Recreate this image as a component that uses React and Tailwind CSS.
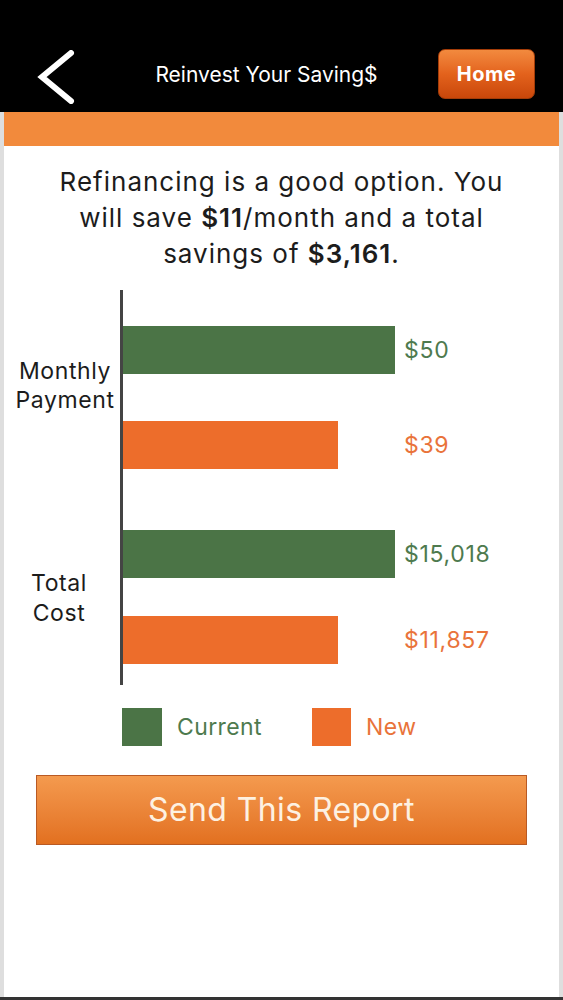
import React from "react";

const font = { fontFamily: 'Inter, "Liberation Sans", Arial, sans-serif' };

function Bar({ width, color, value, textColor, className = "" }) {
  return (
    <div className={`flex items-center ${className}`}>
      <div className="w-[281px] shrink-0">
        <div className={`h-[48px] ${color}`} style={{ width }} />
      </div>
      <span className={`text-[23px] tracking-[0.7px] ${textColor}`}>{value}</span>
    </div>
  );
}

export default function App() {
  return (
    <div className="w-full h-[1000px] bg-black flex flex-col" style={font}>
      {/* status bar + nav */}
      <div className="h-[112px] shrink-0 flex flex-col">
        <div className="h-[48px]" />
        <div className="flex-1 relative flex items-center justify-center">
          <svg
            className="absolute left-[36px] top-[2px]"
            width="40"
            height="54"
            viewBox="0 0 40 54"
          >
            <polyline
              points="35,3 6,27 35,51"
              fill="none"
              stroke="white"
              strokeWidth="6"
              strokeLinecap="round"
              strokeLinejoin="miter"
            />
          </svg>
          <span className="text-white text-[21px] ml-[-30px] mb-[10px]">Reinvest Your Saving$</span>
          <button className="absolute left-[438px] top-[1px] w-[97px] h-[50px] rounded-[7px] border border-[#a33c08] bg-gradient-to-b from-[#f28a3e] via-[#e3621c] to-[#c9470a] text-white font-bold text-[20px] tracking-[0.5px]">
            Home
          </button>
        </div>
      </div>

      {/* content */}
      <div className="flex-1 bg-white border-x-[4px] border-[#dedede] flex flex-col">
        <div className="h-[34px] bg-[#f28a3c] shrink-0" />

        <p className="mt-[18px] text-center text-[26px] tracking-[1px] leading-[36px] text-[#1c1c1c]">
          Refinancing is a good option. You
          <br />
          will save <b className="font-semibold">$11</b>/month and a total
          <br />
          savings of <b className="font-semibold">$3,161</b>.
        </p>

        {/* chart */}
        <div className="mt-[18px] flex flex-col">
          <div className="flex">
            <div className="w-[116px] shrink-0 flex items-center justify-center text-center text-[23px] tracking-[0.6px] leading-[29px] text-[#1c1c1c] pb-[18px] pl-[6px]">
              Monthly
              <br />
              Payment
            </div>
            <div className="border-l-[3px] border-[#444] pt-[36px] pb-[31px]">
              <Bar width="272px" color="bg-[#4b7446]" value="$50" textColor="text-[#4e7a4e]" />
              <Bar width="215px" color="bg-[#ed6d2b]" value="$39" textColor="text-[#e9733a]" className="mt-[47px]" />
            </div>
          </div>
          <div className="flex">
            <div className="w-[116px] shrink-0 flex items-center justify-center text-center text-[23px] tracking-[0.6px] leading-[30px] text-[#1c1c1c] pt-[10px] pr-[6px]">
              Total
              <br />
              Cost
            </div>
            <div className="border-l-[3px] border-[#444] pt-[30px] pb-[21px]">
              <Bar width="272px" color="bg-[#4b7446]" value="$15,018" textColor="text-[#4e7a4e]" />
              <Bar width="215px" color="bg-[#ed6d2b]" value="$11,857" textColor="text-[#e9733a]" className="mt-[38px]" />
            </div>
          </div>
        </div>

        {/* legend */}
        <div className="mt-[23px] flex items-center pl-[118px]">
          <div className="w-[40px] h-[38px] bg-[#4b7446]" />
          <span className="ml-[15px] text-[23px] tracking-[0.4px] text-[#4e7a4e]">Current</span>
          <div className="ml-[50px] w-[39px] h-[38px] bg-[#ed6d2b]" />
          <span className="ml-[15px] text-[23px] tracking-[0.4px] text-[#e9733a]">New</span>
        </div>

        <button className="mt-[29px] ml-[32px] w-[491px] h-[70px] border border-[#b95a24] bg-gradient-to-b from-[#f49a4e] to-[#e2701f] text-[#fdf1e2] text-[32px] tracking-[0.4px]">
          Send This Report
        </button>

        <div className="flex-1" />
      </div>
      <div className="h-[3px] bg-[#333] shrink-0" />
    </div>
  );
}
